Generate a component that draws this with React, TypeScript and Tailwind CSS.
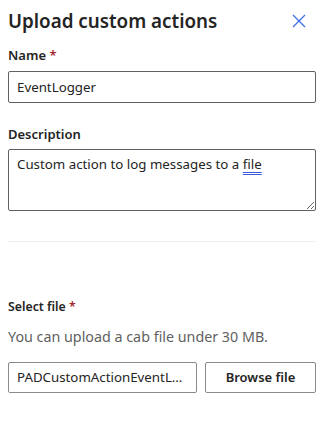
import { useState } from "react";

export default function App() {
  const [name, setName] = useState("EventLogger");
  return (
    <div
      className="w-[327px] h-[442px] bg-white text-[#242424] px-2"
      style={{ fontFamily: '"Noto Sans", "Segoe UI", sans-serif' }}
    >
      <div className="flex h-[38px] items-center justify-between pt-[4px] pr-[13px]">
        <h1 className="text-[18.8px] font-semibold leading-[32px]">Upload custom actions</h1>
        <button className="text-[#3b6fe6]">
          <svg width="14" height="14" viewBox="0 0 14 14" fill="none" stroke="currentColor" strokeWidth="1.3">
            <path d="M1 1l12 12M13 1L1 13" />
          </svg>
        </button>
      </div>

      <div className="w-[308px]">
        <label className="mt-[7px] block text-[13px] font-semibold leading-[20px]">
          Name <span className="text-[#a4262c]">*</span>
        </label>
        <input
          value={name}
          onChange={(e) => setName(e.target.value)}
          className="mt-[6px] block h-[32px] w-full rounded-[2px] border border-[#616161] px-[8px] text-[13.3px] outline-none"
        />

        <label className="mt-[21px] block text-[13px] font-semibold leading-[20px]">Description</label>
        <div className="mt-[5px] h-[62px] w-full resize overflow-auto rounded-[2px] border border-[#616161] px-[8px] py-[4px] text-[13.3px] leading-[20px]">
          Custom action to log messages to a{" "}
          <span className="underline decoration-double decoration-[#3b5bdb] underline-offset-[3px]">file</span>
        </div>

        <div className="mt-[30px] h-px bg-[#f0f0f0]" />

        <label className="mt-[55px] block text-[12.3px] font-semibold leading-[20px]">
          Select file <span className="text-[#a4262c]">*</span>
        </label>
        <p className="mt-[10px] text-[14.3px] leading-[20px] text-[#616161]">You can upload a cab file under 30 MB.</p>

        <div className="mt-[15px] flex gap-[8px]">
          <div className="flex h-[31px] w-[189px] items-center rounded-[2px] border border-[#8a8a8a] px-[8px] text-[13.3px]">
            <span className="truncate">PADCustomActionEventLogger.cab</span>
          </div>
          <button className="h-[31px] flex-1 rounded-[2px] border border-[#8a8a8a] text-[13px] font-semibold">
            Browse file
          </button>
        </div>
      </div>
    </div>
  );
}
